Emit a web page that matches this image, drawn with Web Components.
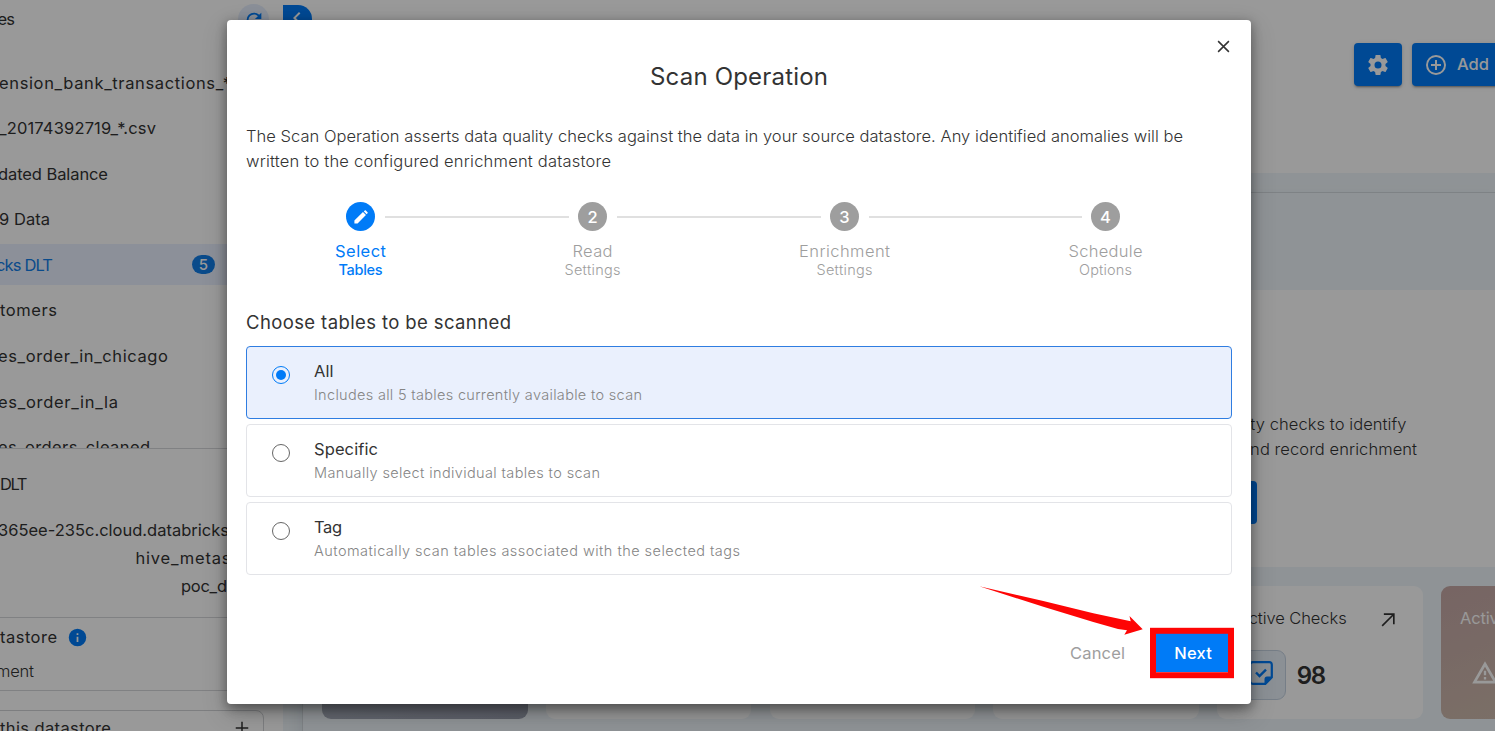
<!DOCTYPE html>
<html lang="en">
<head>
<meta charset="utf-8">
<title>Scan Operation</title>
<style>
html,body{margin:0;height:100%;overflow:hidden}
body{font-family:Inter,"Noto Sans",sans-serif;font-size:16.5px;color:#333;background:#fff;font-weight:400}
</style>
</head>
<body>
<app-shell></app-shell>
<script>
const ICONS = {
  cog:'<path d="M12,15.5A3.5,3.5 0 0,1 8.5,12A3.5,3.5 0 0,1 12,8.5A3.5,3.5 0 0,1 15.5,12A3.5,3.5 0 0,1 12,15.5M19.43,12.97C19.47,12.65 19.5,12.33 19.5,12C19.5,11.67 19.47,11.34 19.43,11L21.54,9.37C21.73,9.22 21.78,8.95 21.66,8.73L19.66,5.27C19.54,5.05 19.27,4.96 19.05,5.05L16.56,6.05C16.04,5.66 15.5,5.32 14.87,5.07L14.5,2.42C14.46,2.18 14.25,2 14,2H10C9.75,2 9.54,2.18 9.5,2.42L9.13,5.07C8.5,5.32 7.96,5.66 7.44,6.05L4.95,5.05C4.73,4.96 4.46,5.05 4.34,5.27L2.34,8.73C2.21,8.95 2.27,9.22 2.46,9.37L4.57,11C4.53,11.34 4.5,11.67 4.5,12C4.5,12.33 4.53,12.65 4.57,12.97L2.46,14.63C2.27,14.78 2.21,15.05 2.34,15.27L4.34,18.73C4.46,18.95 4.73,19.03 4.95,18.95L7.44,17.94C7.96,18.34 8.5,18.68 9.13,18.93L9.5,21.58C9.54,21.82 9.75,22 10,22H14C14.25,22 14.46,21.82 14.5,21.58L14.87,18.93C15.5,18.67 16.04,18.34 16.56,17.94L19.05,18.95C19.27,19.03 19.54,18.95 19.66,18.73L21.66,15.27C21.78,15.05 21.73,14.78 21.54,14.63L19.43,12.97Z"/>',
  plusCircle:'<path d="M12,20C7.59,20 4,16.41 4,12C4,7.59 7.59,4 12,4C16.41,4 20,7.59 20,12C20,16.41 16.41,20 12,20M12,2A10,10 0 0,0 2,12A10,10 0 0,0 12,22A10,10 0 0,0 22,12A10,10 0 0,0 12,2M13,7H11V11H7V13H11V17H13V13H17V11H13V7Z"/>',
  refresh:'<path d="M17.65,6.35C16.2,4.9 14.21,4 12,4A8,8 0 0,0 4,12A8,8 0 0,0 12,20C15.73,20 18.84,17.45 19.73,14H17.65C16.83,16.33 14.61,18 12,18A6,6 0 0,1 6,12A6,6 0 0,1 12,6C13.66,6 15.14,6.69 16.22,7.78L13,11H20V4L17.65,6.35Z"/>',
  chevron:'<path d="M15.41,16.58L10.83,12L15.41,7.41L14,6L8,12L14,18L15.41,16.58Z"/>',
  pencil:'<path d="M20.71,7.04C21.1,6.65 21.1,6 20.71,5.63L18.37,3.29C18,2.9 17.35,2.9 16.96,3.29L15.8,4.5L19.55,8.25M3.2,16.6V20.8H7.4L18.6,9.4L14.6,5.4Z"/>',
  info:'<path d="M13,9H11V7H13M13,17H11V11H13M12,2A10,10 0 0,0 2,12A10,10 0 0,0 12,22A10,10 0 0,0 22,12A10,10 0 0,0 12,2Z"/>',
  plus:'<path d="M12 4.5V19.5M4.5 12H19.5" fill="none" stroke="currentColor" stroke-width="1.8"/>',
  close:'<path d="M5.2 5.2L18.8 18.8M18.8 5.2L5.2 18.8" fill="none" stroke="currentColor" stroke-width="1.9"/>',
  arrow:'<path d="M5 19L18.3 5.7M7 5H19V17" fill="none" stroke="currentColor" stroke-width="2"/>',
  alert:'<path fill-rule="evenodd" d="M12,2L1,21H23ZM12,6.6L19,18.7H5ZM11,10V14H13V10ZM11,15.5V17.5H13V15.5Z"/>',
  note:'<path d="M3.7 1.2H20.3A2.5 2.5 0 0 1 22.8 3.7V16.3L16.3 22.8H3.7A2.5 2.5 0 0 1 1.2 20.3V3.7A2.5 2.5 0 0 1 3.7 1.2Z" fill="none" stroke="currentColor" stroke-width="2.2"/><path d="M15.5 23V18A2.5 2.5 0 0 1 18 15.5H23Z"/><path d="M7 11.5L10.5 15L17 8.7" fill="none" stroke="currentColor" stroke-width="2.4"/>'
};
const define = (name, html, setup) => {
  const tpl = document.createElement('template');
  tpl.innerHTML = typeof html === 'string' ? html : '';
  customElements.define(name, class extends HTMLElement {
    constructor(){ super(); this.attachShadow({mode:'open'}); }
    connectedCallback(){
      if (this.shadowRoot.firstChild) return;
      if (typeof html === 'function') this.shadowRoot.innerHTML = html(this);
      else this.shadowRoot.append(document.importNode(tpl.content, true));
      if (setup) setup(this);
    }
  });
};

define('app-shell', `<style>
:host{display:block;position:relative;width:100%;height:731px;overflow:hidden}
.page{display:flex;height:100%}
.scrim{position:absolute;inset:0;background:rgba(0,0,0,.4);z-index:1}
.layer{position:absolute;inset:0;z-index:2;padding:20px 0 0 227px;display:flex;align-items:flex-start}
call-out{position:absolute;left:970px;top:576px;z-index:3}
</style>
<div class="page"><side-nav></side-nav><main-view></main-view></div>
<div class="scrim"></div>
<div class="layer"><scan-dialog></scan-dialog></div>
<call-out></call-out>`);

define('side-nav', `<style>
:host{display:flex;flex-direction:column;flex:none;width:283px;height:731px;overflow:hidden;background:#fff;color:#333}
:host>*{flex:none}
header{display:flex;justify-content:space-between;height:39px;padding:0 14px 0 0;align-items:center}
header fit-text{margin:-2px 0 0 -2.5px}
.round{width:31px;height:31px;border-radius:50%;background:#e6effd;color:#007bf7;display:flex;align-items:center;justify-content:center}
.list{height:386px;margin-top:23px;overflow:hidden;display:flex;flex-direction:column;gap:4.6px}
.info{border-top:1px solid #d5d7da;height:169px;box-sizing:border-box;padding-top:21px;line-height:28px}
.info div{height:28px;display:flex}
.info div:first-child{margin-bottom:18px}
.store{height:74px;box-sizing:border-box;border-top:1px solid #d5d7da;border-bottom:1px solid #d5d7da;padding-top:6px;line-height:26px}
.store div{display:flex;align-items:center;height:26px;gap:10px}
.store div+div{margin-top:8px;font-weight:300}
.box{display:flex;justify-content:space-between;align-items:center;border:1px solid #d0d2d5;border-radius:8px;height:36px;box-sizing:border-box;margin:19px 19.5px 0 -10px;padding:0 10.5px 1px 9px}
ui-icon{color:#007bf7}.box ui-icon{color:#333}
</style>
<header><fit-text w="17.5">es</fit-text><div class="round"><ui-icon name="refresh" size="22"></ui-icon></div></header>
<div class="list">
<nav-row x="-1" w="232">ension_bank_transactions_*</nav-row>
<nav-row x="-1" w="157">_20174392719_*.csv</nav-row>
<nav-row x="-2" w="110">dated Balance</nav-row>
<nav-row x="-1" w="51">9 Data</nav-row>
<nav-row x="-4" w="57" active count="5">cks DLT</nav-row>
<nav-row x="0" w="57">tomers</nav-row>
<nav-row x="-2" w="170">es_order_in_chicago</nav-row>
<nav-row x="-2" w="120">es_order_in_la</nav-row>
<nav-row x="-2" w="152">es_orders_cleaned</nav-row>
</div>
<div class="info"><div><fit-text w="27.5">DLT</fit-text></div>
<div style="margin-left:-2px"><fit-text w="231">365ee-235c.cloud.databricks</fit-text></div>
<div style="margin-left:135.5px"><fit-text w="95">hive_metas</fit-text></div>
<div style="margin-left:181px"><fit-text w="55">poc_da</fit-text></div></div>
<div class="store"><div><fit-text w="57">tastore</fit-text><ui-icon name="info" size="21"></ui-icon></div><div style="margin-left:-4px"><fit-text w="38">ment</fit-text></div></div>
<div class="box"><fit-text w="111">this datastore</fit-text><ui-icon name="plus" size="20"></ui-icon></div>`);

define('nav-row', h => `<style>
:host{display:flex;flex:none;align-items:center;justify-content:space-between;height:41px;box-sizing:border-box;padding:0 68px 0 0}
:host([active]){background:#e9f0ff;color:#127de8}
.t{margin-left:${h.getAttribute('x')}px}
:host([active]) .t{padding-top:1px}
.b{width:23px;height:19px;border-radius:9.5px;background:#127de8;color:#fff;font-size:15px;font-weight:500;line-height:19px;text-align:center}
</style><span class="t"><fit-text w="${h.getAttribute('w')}">${h.textContent}</fit-text></span>${h.hasAttribute('count')?`<span class="b">${h.getAttribute('count')}</span>`:''}`);

define('main-view', `<style>
:host{display:flex;flex-direction:column;flex:1;min-width:0;height:731px;background:#eff6fa;overflow:hidden}
header{flex:none;height:173px;background:#fff;display:flex;justify-content:space-between}
.tab{width:29px;height:29px;margin-top:5px;border-radius:0 14px 14px 0;background:#007bf7;color:#fff;display:flex;align-items:center;justify-content:center}
.tab ui-icon{margin:-4px 0 0 -1px}
.acts{display:flex;gap:10px;margin:43px -20px 0 0}
.btn{height:43px;box-sizing:border-box;border-radius:4px;background:#007bf7;color:#fff;display:flex;align-items:center;justify-content:center;box-shadow:0 3px 1px -2px rgba(0,0,0,.2),0 2px 2px rgba(0,0,0,.14),0 1px 5px rgba(0,0,0,.12);font-weight:500}
.cog{width:48px}.add{width:103px;justify-content:flex-start;padding-left:12px;gap:9px}
.frame{flex:none;height:560px;box-sizing:border-box;margin:19px -20px 0 19px;border:1px solid #d3d9de;box-shadow:-10px 0 14px -8px rgba(120,140,160,.18)}
.hero{margin-top:97px;height:277px;background:#fff;display:flex;flex-direction:column;align-items:flex-end;box-sizing:border-box;padding-top:122px;line-height:25px;font-weight:300;color:#333}
.r1{margin-right:107.5px}.r2{margin-right:97px}
.go{width:100px;height:43px;border-radius:4px;background:#007bf7;margin:19px 257px 0 0}
.cards{display:flex;gap:18.3px;margin:19px 0 0 19px;width:1400px}
</style>
<header><div class="tab"><ui-icon name="chevron" size="24"></ui-icon></div>
<div class="acts"><div class="btn cog"><ui-icon name="cog" size="24"></ui-icon></div><div class="btn add"><ui-icon name="plusCircle" size="24"></ui-icon><fit-text w="32" style="margin-top:-2px">Add</fit-text></div></div></header>
<div class="frame"><div class="hero"><div class="r1"><fit-text w="193">quality checks to identify</fit-text></div><div class="r2"><fit-text w="176">and record enrichment</fit-text></div><div class="go"></div></div>
<div class="cards"><stat-card tone="slate"></stat-card><stat-card></stat-card><stat-card></stat-card><stat-card></stat-card>
<stat-card icon="note" label="Active Checks" lw="109" value="98"></stat-card><stat-card tone="warm" icon="alert" label="Active" lw="48" value=""></stat-card></div></div>`);

define('stat-card', h => `<style>
:host{display:flex;flex-direction:column;flex:none;box-sizing:border-box;width:205.5px;height:133px;border-radius:9px;background:#fff;padding:19px 25px 0 20.5px;font-weight:300}
:host([tone=slate]){background:linear-gradient(160deg,#b8c0cc,#9b9faf)}
:host([tone=warm]){background:linear-gradient(160deg,#c6a8a6,#cfbfae);color:#fff;font-weight:400;padding-left:19px}
.top{display:flex;justify-content:space-between;align-items:center;height:26px}
.top ui-icon{margin-top:4px}
.bot{display:flex;align-items:center;gap:11px;margin:19px 0 0 -2px;height:50px;color:#333;font-size:24px;font-weight:600}
.ic{width:48px;height:48px;border:1px solid #c5d3e2;border-radius:9px;background:#e8f0f8;color:#007bf7;display:flex;align-items:center;justify-content:center}
.ic ui-icon{margin-top:-4px}
:host([tone=warm]) .ic{border-color:transparent;background:none;color:#fff}
:host([tone=warm]) .ic ui-icon{margin:-4px 0 0 4px}
</style>${h.hasAttribute('label')?`<div class="top"><fit-text w="${h.getAttribute('lw')}">${h.getAttribute('label')}</fit-text><ui-icon name="arrow" size="20"></ui-icon></div>
<div class="bot"><span class="ic"><ui-icon name="${h.getAttribute('icon')}" size="${h.getAttribute('icon')==='alert'?28:24}"></ui-icon></span>${h.getAttribute('value')?`<fit-text w="29.5">${h.getAttribute('value')}</fit-text>`:''}</div>`:''}`);

define('scan-dialog', `<style>
:host{display:flex;flex-direction:column;box-sizing:border-box;width:1024px;height:684px;background:#fff;border-radius:4px;padding:0 19px;color:#333;box-shadow:0 11px 15px -7px rgba(0,0,0,.2),0 9px 24px 3px rgba(0,0,0,.14),0 3px 10px 2px rgba(0,0,0,.25)}
:host>*{flex:none}
.x{display:flex;justify-content:flex-end;height:18px;padding:17px 0 0;margin-right:-1px}
h1{margin:5px 0 0;height:34px;line-height:34px;font-size:24px;font-weight:430;display:flex;justify-content:center}
p{margin:30px 0 0;line-height:25px;font-weight:300;height:50px}
.steps{display:flex;margin:28px 0 0 69.5px;height:80px}
.line{flex:none;height:2px;margin-top:14px;background:#e0e0e0}
h2{margin:27px 0 0;height:26px;line-height:26px;font-size:18.5px;font-weight:430;display:flex}
.opts{display:flex;flex-direction:column;gap:5px;margin-top:11px}
.foot{display:flex;justify-content:flex-end;align-items:center;margin-top:58px;height:39px;padding-right:4px;gap:31px;color:#9e9e9e}
.next{width:72px;height:39px;background:#007bf7;color:#fff;font-weight:500;display:flex;align-items:center;justify-content:center;padding-left:2px;box-sizing:border-box}
</style>
<div class="x"><ui-icon name="close" size="19"></ui-icon></div>
<h1><fit-text w="178">Scan Operation</fit-text></h1>
<p><fit-text w="937">The Scan Operation asserts data quality checks against the data in your source datastore. Any identified anomalies will be</fit-text><br><fit-text w="365">written to the configured enrichment datastore</fit-text></p>
<div class="steps">
<step-item active mark="" a="Select" aw="51" b="Tables" bw="44"></step-item><i class="line" style="width:184px;margin-left:-20.5px"></i>
<step-item mark="2" a="Read" aw="40" b="Settings" bw="56" style="margin-left:-21.5px"></step-item><i class="line" style="width:204px;margin-left:-20.5px"></i>
<step-item mark="3" a="Enrichment" aw="91" b="Settings" bw="56" style="margin-left:-21.5px"></step-item><i class="line" style="width:213px;margin-left:-20.5px"></i>
<step-item mark="4" a="Schedule" aw="74" b="Options" bw="53" style="margin-left:-21.5px"></step-item>
</div>
<h2><fit-text w="265">Choose tables to be scanned</fit-text></h2>
<div class="opts">
<radio-card checked a="All" aw="19.5" b="Includes all 5 tables currently available to scan" bw="328"></radio-card>
<radio-card a="Specific" aw="64" b="Manually select individual tables to scan" bw="286"></radio-card>
<radio-card a="Tag" aw="28" b="Automatically scan tables associated with the selected tags" bw="426"></radio-card>
</div>
<div class="foot"><fit-text w="55">Cancel</fit-text><span class="next"><fit-text w="37.5">Next</fit-text></span></div>`);

define('step-item', h => `<style>
:host{display:flex;flex-direction:column;flex:none;align-items:center;width:90px;color:#9e9e9e;font-weight:350}
:host([active]){color:#007bf7;font-weight:400}
.dot{width:29px;height:29px;border-radius:50%;background:#9e9e9e;color:#fff;display:flex;align-items:center;justify-content:center;font-weight:500;font-size:16.5px}
:host([active]) .dot{background:#007bf7}
.a{margin-top:10px;height:20px;line-height:20px}
.b{font-size:14.5px;height:18px;line-height:18px}
:host([active]) .b{font-weight:470}
ui-icon{color:#fff}
</style><span class="dot">${h.getAttribute('mark')||'<ui-icon name="pencil" size="18"></ui-icon>'}</span>
<span class="a"><fit-text w="${h.getAttribute('aw')}">${h.getAttribute('a')}</fit-text></span><span class="b"><fit-text w="${h.getAttribute('bw')}">${h.getAttribute('b')}</fit-text></span>`);

define('radio-card', h => `<style>
:host{display:flex;box-sizing:border-box;height:73px;border:1px solid #e3e4e8;border-radius:4px;padding:12px 25px}
:host([checked]){background:#eaf0fd;border-color:#2f7de1}
.dot{box-sizing:border-box;flex:none;width:18px;height:18px;margin:7px 24px 0 0;border:1.5px solid #666;border-radius:50%;display:flex;align-items:center;justify-content:center;background:#fff}
:host([checked]) .dot{border:1.5px solid #007bf7;background:none}
:host([checked]) .dot::after{content:"";width:10px;height:10px;border-radius:50%;background:#007bf7}
.a{height:24px;line-height:24px;display:flex}
.b{font-size:14.5px;font-weight:300;line-height:24px;color:#858585;display:flex}
</style><span class="dot"></span><div><div class="a"><fit-text w="${h.getAttribute('aw')}">${h.getAttribute('a')}</fit-text></div><div class="b"><fit-text w="${h.getAttribute('bw')}">${h.getAttribute('b')}</fit-text></div></div>`);

define('call-out', `<style>:host{display:block;width:270px;height:106px}svg{display:block}</style>
<svg width="270" height="106"><path d="M9.3 10.3L73.3 25L123.3 37.3L160.7 45.3L159.5 40L172.7 53.3L154.3 58.7L157 54.3L148 53L123.3 45.9L73.3 30.7Z" fill="#fe0505"/>
<rect x="183" y="54.8" width="78" height="44.4" fill="none" stroke="#fe0505" stroke-width="6"/></svg>`);

define('ui-icon', h => { const s=h.getAttribute('size'); return `<style>:host{display:block;flex:none;width:${s}px;height:${s}px}svg{display:block}</style><svg width="${s}" height="${s}" viewBox="0 0 24 24" fill="currentColor">${ICONS[h.getAttribute('name')]}</svg>`; });

// Tracks a single line of text so that it fills the width given in "w".
define('fit-text', `<style>:host{display:inline-block;white-space:nowrap}</style><slot></slot>`, el => {
  const n = el.textContent.length, w = parseFloat(el.getAttribute('w'));
  const s = (w - el.getBoundingClientRect().width) / Math.max(1, n - 1);
  el.style.letterSpacing = s.toFixed(3) + 'px';
  el.style.marginRight = (-s).toFixed(3) + 'px';
});
</script>
</body>
</html>
